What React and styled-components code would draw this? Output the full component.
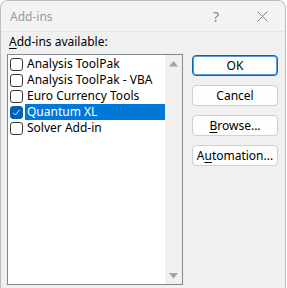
import React from "react";
import styled, { createGlobalStyle } from "styled-components";

const Global = createGlobalStyle`
  html, body { margin: 0; padding: 0; background: #ffffff; }
  body { font-family: "Noto Sans", "Open Sans", sans-serif; font-size: 12px; overflow: hidden; }
`;

const Dialog = styled.div`
  width: 286px;
  height: 300px;
  box-sizing: border-box;
  background: #f0f0f0;
  border: 1px solid #bdbdbd;
  border-bottom: none;
  border-radius: 8px 8px 0 0;
  overflow: hidden;
`;

const TitleBar = styled.div`
  height: 30px;
  display: flex;
  align-items: center;
  background: #f3f3f3;
  border-bottom: 1px solid #e6e6e6;
  padding-left: 9px;
  color: #9a9a9a;
`;

const Title = styled.div`
  flex: 1;
  font-size: 12px;
`;

const TitleButton = styled.div`
  width: ${(p) => p.$w}px;
  height: 30px;
  display: flex;
  align-items: center;
  justify-content: center;
  color: #8a8a8a;
  font-size: 14px;
`;

const Body = styled.div`
  display: flex;
  padding: 2px 0 0 6px;
  gap: 9px;
`;

const LeftCol = styled.div`
  display: flex;
  flex-direction: column;
  width: 176px;
`;

const Label = styled.div`
  height: 16px;
  line-height: 16px;
  padding-left: 2px;
  margin-bottom: 4px;
  color: #000;
`;

const U = styled.span`
  text-decoration: underline;
  text-underline-offset: 2px;
`;

const ListBox = styled.div`
  height: 229px;
  display: flex;
  background: #ffffff;
  border: 1px solid #828790;
`;

const Items = styled.div`
  flex: 1;
  padding-top: 1px;
`;

const Row = styled.div`
  height: 16px;
  display: flex;
  align-items: center;
`;

const Box = styled.div`
  width: 13px;
  height: 13px;
  box-sizing: border-box;
  margin-left: 2px;
  margin-right: 2px;
  border-radius: 3px;
  border: 1px solid ${(p) => (p.$checked ? "#005fb8" : "#3c3c3c")};
  background: ${(p) => (p.$checked ? "#005fb8" : "#ffffff")};
  display: flex;
  align-items: center;
  justify-content: center;
  flex: none;
`;

const ItemText = styled.div`
  flex: 1;
  height: 16px;
  line-height: 16px;
  padding-left: 2px;
  background: ${(p) => (p.$sel ? "#0078d7" : "transparent")};
  color: ${(p) => (p.$sel ? "#ffffff" : "#000000")};
  white-space: nowrap;
`;

const ScrollBar = styled.div`
  width: 17px;
  background: #f0f0f0;
  display: flex;
  flex-direction: column;
  justify-content: space-between;
  align-items: center;
  padding: 6px 0 5px;
`;

const Buttons = styled.div`
  display: flex;
  flex-direction: column;
  gap: 9px;
  padding-top: 21px;
`;

const Button = styled.div`
  width: 86px;
  height: 21px;
  box-sizing: border-box;
  border-radius: 4px;
  background: #fdfdfd;
  border: 1px solid ${(p) => (p.$default ? "#0067c0" : "#d0d0d0")};
  box-shadow: ${(p) => (p.$default ? "inset 0 0 0 1px #5a9bd8" : "none")};
  display: flex;
  align-items: center;
  justify-content: center;
  color: #000;
`;

const Check = () => (
  <svg width="9" height="9" viewBox="0 0 9 9">
    <path d="M1.2 4.8 L3.4 7 L7.8 1.8" fill="none" stroke="#d8e8f8" strokeWidth="1" />
  </svg>
);

const Arrow = ({ down }) => (
  <svg width="9" height="6" viewBox="0 0 9 6">
    <path d={down ? "M0 0 H9 L4.5 5.5 Z" : "M0 5.5 H9 L4.5 0 Z"} fill="#a3a3a3" />
  </svg>
);

const items = [
  { name: "Analysis ToolPak" },
  { name: "Analysis ToolPak - VBA" },
  { name: "Euro Currency Tools" },
  { name: "Quantum XL", checked: true, sel: true },
  { name: "Solver Add-in" },
];

export default function App() {
  return (
    <>
      <Global />
      <Dialog>
        <TitleBar>
          <Title>Add-ins</Title>
          <TitleButton $w={46}>?</TitleButton>
          <TitleButton $w={46}>
            <svg width="11" height="11" viewBox="0 0 11 11">
              <path d="M0.5 0.5 L10.5 10.5 M10.5 0.5 L0.5 10.5" stroke="#8a8a8a" strokeWidth="1" />
            </svg>
          </TitleButton>
        </TitleBar>
        <Body>
          <LeftCol>
            <Label>
              <U>A</U>dd-ins available:
            </Label>
            <ListBox>
              <Items>
                {items.map((it) => (
                  <Row key={it.name}>
                    <Box $checked={it.checked}>{it.checked && <Check />}</Box>
                    <ItemText $sel={it.sel}>{it.name}</ItemText>
                  </Row>
                ))}
              </Items>
              <ScrollBar>
                <Arrow />
                <Arrow down />
              </ScrollBar>
            </ListBox>
          </LeftCol>
          <Buttons>
            <Button $default>OK</Button>
            <Button>Cancel</Button>
            <Button>
              <span>
                <U>B</U>rowse...
              </span>
            </Button>
            <Button>
              <span>
                A<U>u</U>tomation...
              </span>
            </Button>
          </Buttons>
        </Body>
      </Dialog>
    </>
  );
}
